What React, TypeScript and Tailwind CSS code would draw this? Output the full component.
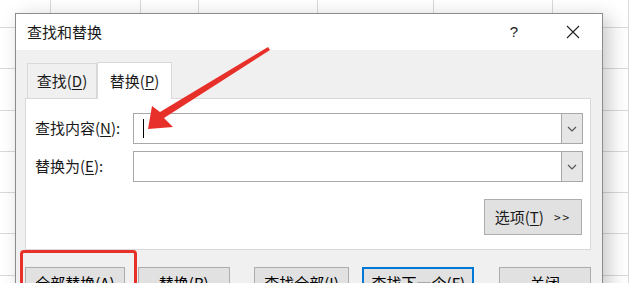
const rowClasses = [
  "h-[28px]",
  "h-[41px]",
  "h-[42px]",
  "h-[41px]",
  "h-[41px]",
  "h-[41px]",
  "h-[42px]",
  "h-[41px]",
];

const colClasses = [
  "w-[53px]",
  "w-[95px]",
  "w-[60px]",
  "w-[125px]",
  "w-[122px]",
  "w-[124px]",
  "w-[80px]",
];

const cjk = "font-['Microsoft_YaHei','Noto_Sans_CJK_SC',sans-serif]";

function Key({ k }: { k: string }) {
  return (
    <>
      (<span className="underline underline-offset-2">{k}</span>)
    </>
  );
}

function Combo({ caret }: { caret?: boolean }) {
  return (
    <div className="flex-1 h-[31px] flex border border-[#a8a8a8] bg-white">
      <div className="flex-1 flex items-center pl-[9px]">
        {caret && <div className="w-px h-[19px] bg-black" />}
      </div>
      <div className="w-[21px] bg-[#e6e6e6] border-l border-[#a8a8a8] flex items-center justify-center">
        <svg width="10" height="6" viewBox="0 0 10 6">
          <polyline points="1,1 5,5 9,1" fill="none" stroke="#555" strokeWidth="1.2" />
        </svg>
      </div>
    </div>
  );
}

function Btn({
  children,
  className,
  focused,
}: {
  children: React.ReactNode;
  className: string;
  focused?: boolean;
}) {
  return (
    <div
      className={
        "h-[31px] flex items-center justify-center bg-[#e1e1e1] text-[15px] text-black leading-none " +
        (focused ? "border-2 border-[#0078d7] " : "border border-[#adadad] ") +
        className
      }
    >
      {children}
    </div>
  );
}

export default function App() {
  return (
    <div className={`relative w-[629px] h-[283px] overflow-hidden bg-white ${cjk}`}>
      {/* spreadsheet grid behind the dialog */}
      <div className="flex flex-col">
        {rowClasses.map((r, i) => (
          <div key={i} className={`flex border-b border-[#d9d9d9] ${r}`}>
            {colClasses.map((c, j) => (
              <div key={j} className={`border-r border-[#d9d9d9] ${c}`} />
            ))}
          </div>
        ))}
      </div>

      {/* dialog */}
      <div className="absolute left-[15px] top-[13px] w-[588px] h-[290px] border border-[#8c8c8c] bg-[#f0f0f0] shadow-[6px_4px_18px_rgba(0,0,0,0.22)] flex flex-col">
        <div className="h-[36px] bg-white flex items-center pl-[11px] text-[15px] text-[#1a1a1a]">
          <span className="flex-1">查找和替换</span>
          <span className="w-[40px] text-center mr-[32px] text-[15px] font-['Liberation_Sans',sans-serif]">?</span>
          <svg width="14" height="14" viewBox="0 0 14 14" className="mr-[22px]">
            <path d="M1 1 L13 13 M13 1 L1 13" stroke="#222" strokeWidth="1.1" />
          </svg>
        </div>

        <div className="pl-[9px] pr-[11px] pt-[11px] flex flex-col">
          {/* tabs */}
          <div className="flex items-end h-[37px] text-[15px] text-[#1a1a1a]">
            <div className="ml-[2px] w-[70px] h-[35px] border border-b-0 border-[#d9d9d9] bg-[#f0f0f0] flex items-center justify-center">
              查找<Key k="D" />
            </div>
            <div className="w-[75px] h-[37px] border border-b-0 border-[#d9d9d9] bg-white flex items-center justify-center -mb-px relative z-10">
              替换<Key k="P" />
            </div>
          </div>

          {/* tab panel */}
          <div className="h-[152px] border border-[#d9d9d9] bg-white pl-[9px] pr-[7px] pt-[14px] flex flex-col text-[15px] text-[#1a1a1a]">
            <div className="flex items-center">
              <span className="w-[98px]">查找内容<Key k="N" />:</span>
              <Combo caret />
            </div>
            <div className="flex items-center mt-[7px]">
              <span className="w-[98px]">替换为<Key k="E" />:</span>
              <Combo />
            </div>
            <div className="flex justify-end mt-[17px] pr-px">
              <div className="w-[98px] h-[36px] bg-[#e1e1e1] border border-[#adadad] flex items-center justify-center">
                选项<Key k="T" />
                <span className="ml-[10px] text-[12px] tracking-[2px]">&gt;&gt;</span>
              </div>
            </div>
          </div>

          {/* buttons */}
          <div className="flex mt-[17px]">
            <Btn className="w-[100px]">
              全部替换<Key k="A" />
            </Btn>
            <Btn className="ml-[13px] w-[92px]">
              替换<Key k="R" />
            </Btn>
            <Btn className="ml-[24px] w-[96px]">
              查找全部<Key k="I" />
            </Btn>
            <Btn focused className="ml-[13px] w-[112px]">
              查找下一个<Key k="F" />
            </Btn>
            <Btn className="ml-[25px] w-[92px]">关闭</Btn>
          </div>
        </div>
      </div>

      {/* red highlight box */}
      <div className="absolute left-[20px] top-[250px] w-[117px] h-[50px] border-[3px] border-[#e8302a] rounded-[4px]" />

      {/* red arrow */}
      <svg className="absolute left-0 top-0" width="629" height="283" viewBox="0 0 629 283">
        <polygon
          points="268,47 270,50 164,118 173,127 148,129 152,106 160,112"
          fill="#e8302a"
        />
      </svg>
    </div>
  );
}
